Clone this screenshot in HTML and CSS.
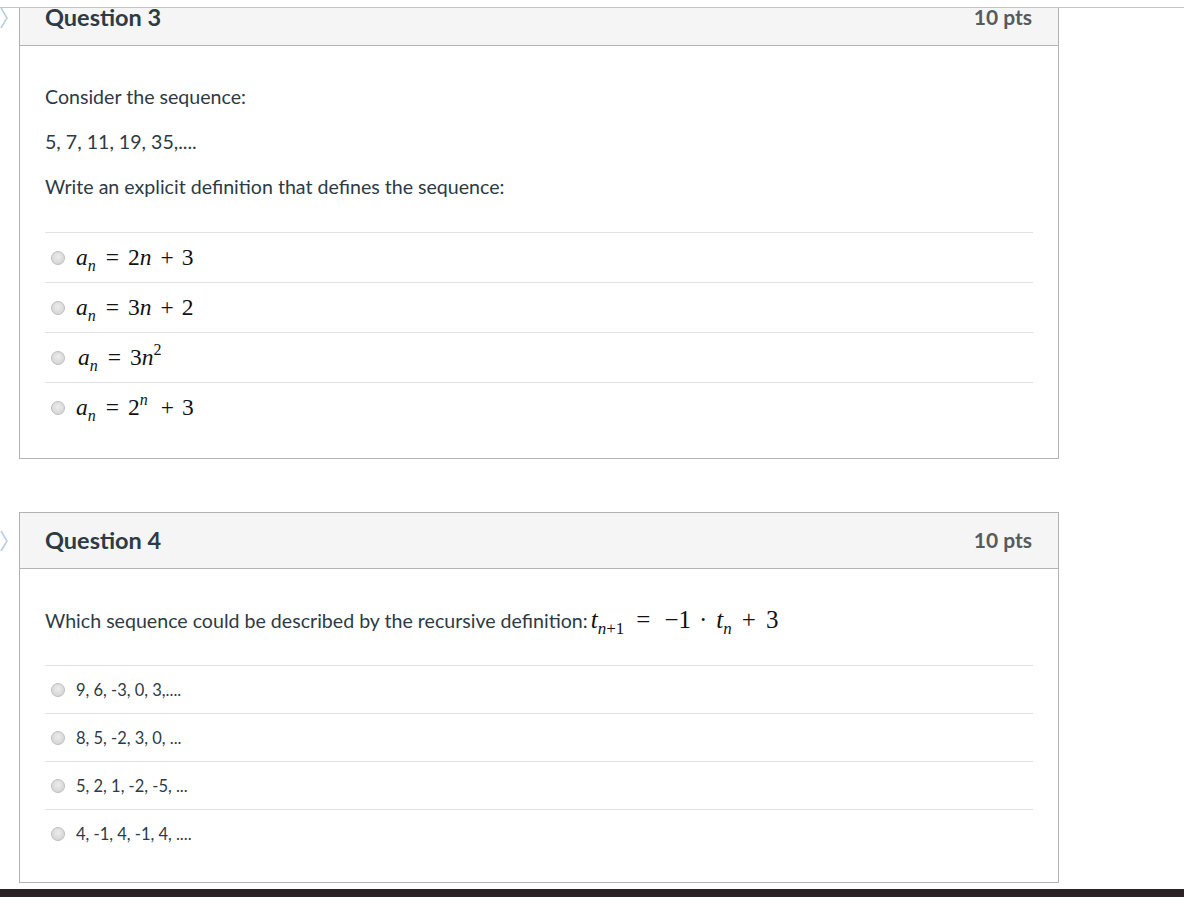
FILE: index.html
```html
<!DOCTYPE html>
<html lang="en">
<head>
<meta charset="utf-8">
<title>Quiz</title>
<link rel="stylesheet" href="styles.css">
</head>
<body>
<div class="topbar"></div>
<main class="page">
  <section class="question q-first">
    <svg class="flag" width="10" height="22" viewBox="0 0 10 22"><polyline points="1,1 7,11 1,21" fill="none" stroke="#b9cfe0" stroke-width="1.6"/></svg>
    <header class="q-header">
      <h2 class="q-name">Question 3</h2>
      <span class="q-pts">10 pts</span>
    </header>
    <div class="q-body">
      <p>Consider the sequence:</p>
      <p>5, 7, 11, 19, 35,....</p>
      <p class="last">Write an explicit definition that defines the sequence:</p>
      <div class="answers">
        <div class="answer tall"><span class="radio"></span><span class="math"><i>a</i><sub><i>n</i></sub><span class="op">=</span>2<i>n</i><span class="bin">+</span>3</span></div>
        <div class="answer tall"><span class="radio"></span><span class="math"><i>a</i><sub><i>n</i></sub><span class="op">=</span>3<i>n</i><span class="bin">+</span>2</span></div>
        <div class="answer tall"><span class="radio"></span><span class="math shift"><i>a</i><sub><i>n</i></sub><span class="op">=</span>3<i>n</i><sup>2</sup></span></div>
        <div class="answer tall"><span class="radio"></span><span class="math"><i>a</i><sub><i>n</i></sub><span class="op">=</span>2<sup><i>n</i></sup><span class="bin gap">+</span>3</span></div>
      </div>
    </div>
  </section>

  <section class="question q-second">
    <svg class="flag" width="10" height="22" viewBox="0 0 10 22"><polyline points="1,1 7,11 1,21" fill="none" stroke="#b9cfe0" stroke-width="1.6"/></svg>
    <header class="q-header">
      <h2 class="q-name">Question 4</h2>
      <span class="q-pts">10 pts</span>
    </header>
    <div class="q-body">
      <p class="last">Which sequence could be described by the recursive definition:<span class="math inline"><i>t</i><sub><i>n</i>+1</sub><span class="op wide">=</span>&minus;1<span class="dot">&middot;</span><i>t</i><sub><i>n</i></sub><span class="bin">+</span>3</span></p>
      <div class="answers">
        <div class="answer"><span class="radio"></span><span class="txt">9, 6, -3, 0, 3,....</span></div>
        <div class="answer"><span class="radio"></span><span class="txt">8, 5, -2, 3, 0, ...</span></div>
        <div class="answer"><span class="radio"></span><span class="txt">5, 2, 1, -2, -5, ...</span></div>
        <div class="answer"><span class="radio"></span><span class="txt">4, -1, 4, -1, 4, ....</span></div>
      </div>
    </div>
  </section>
</main>
<footer class="footer"></footer>
</body>
</html>
```

FILE: styles.css
```css
html, body {
  margin: 0;
  padding: 0;
  background: #ffffff;
}
body {
  font-family: Lato, "Open Sans", sans-serif;
  color: #2d3b45;
  overflow: hidden;
}
.topbar {
  position: fixed;
  top: 0;
  left: 0;
  right: 0;
  height: 7px;
  background: #ffffff;
  border-bottom: 1px solid #c4c4c4;
  z-index: 10;
}
.page {
  padding-left: 19px;
  width: 1040px;
}
.question {
  position: relative;
  border: 1px solid #b3b3b3;
  background: #fff;
  margin-top: 53px;
}
.question.q-first {
  margin-top: -11px;
}
.flag {
  position: absolute;
  left: -20px;
  top: 17px;
}
.q-header {
  box-sizing: border-box;
  height: 56px;
  background: #f5f5f5;
  border-bottom: 1px solid #b3b3b3;
  display: flex;
  align-items: center;
  justify-content: space-between;
  padding: 0 26px 2px 25px;
}
.q-name {
  margin: 0;
  font-size: 23.5px;
  font-weight: 700;
  color: #2d3b45;
}
.q-pts {
  font-size: 21px;
  font-weight: 700;
  color: #555b5f;
}
.q-body {
  padding: 37px 25px 26px;
}
.q-body p {
  margin: 0 0 18px;
  font-size: 19.6px;
  line-height: 27px;
}
.q-body p.last {
  margin-bottom: 32px;
}
.q-second .q-body {
  padding-bottom: 25px;
}
.q-second .q-body p.last {
  margin-bottom: 31px;
}
.answers {
  display: flex;
  flex-direction: column;
}
.answer {
  height: 47px;
  border-top: 1px solid #e2e2e2;
  display: flex;
  align-items: center;
  padding-left: 6px;
}
.answer.tall {
  height: 49px;
}
.radio {
  width: 14px;
  height: 14px;
  border-radius: 50%;
  border: 1px solid #bdbdbd;
  background: radial-gradient(circle at 50% 40%, #ececec 0%, #dadada 65%, #cdcdcd 100%);
  box-sizing: border-box;
  margin-right: 11px;
  flex: none;
}
.txt {
  font-size: 16.5px;
  color: #2d3b45;
}
.math {
  font-family: "Liberation Serif", "DejaVu Serif", serif;
  font-size: 23.5px;
  color: #111;
  white-space: nowrap;
}
.math.shift {
  margin-left: 2px;
}
.math i {
  font-style: italic;
}
.math sub {
  font-size: 16px;
  vertical-align: -6px;
  line-height: 0;
}
.math sup {
  font-size: 16px;
  vertical-align: 10px;
  line-height: 0;
}
.math .op {
  margin: 0 9px 0 10px;
}
.math .bin {
  margin: 0 8px 0 9px;
}
.math .bin.gap {
  margin-left: 13px;
}
.math.inline {
  margin-left: 3px;
  font-size: 25px;
}
.math.inline sub {
  font-size: 17px;
}
.math.inline .op.wide {
  margin: 0 14px 0 12px;
}
.math.inline .dot {
  margin: 0 9px 0 8px;
}
.math.inline .bin {
  margin: 0 10px 0 10px;
}
.footer {
  margin-top: 6px;
  height: 20px;
  background: #2b2326;
}
```
